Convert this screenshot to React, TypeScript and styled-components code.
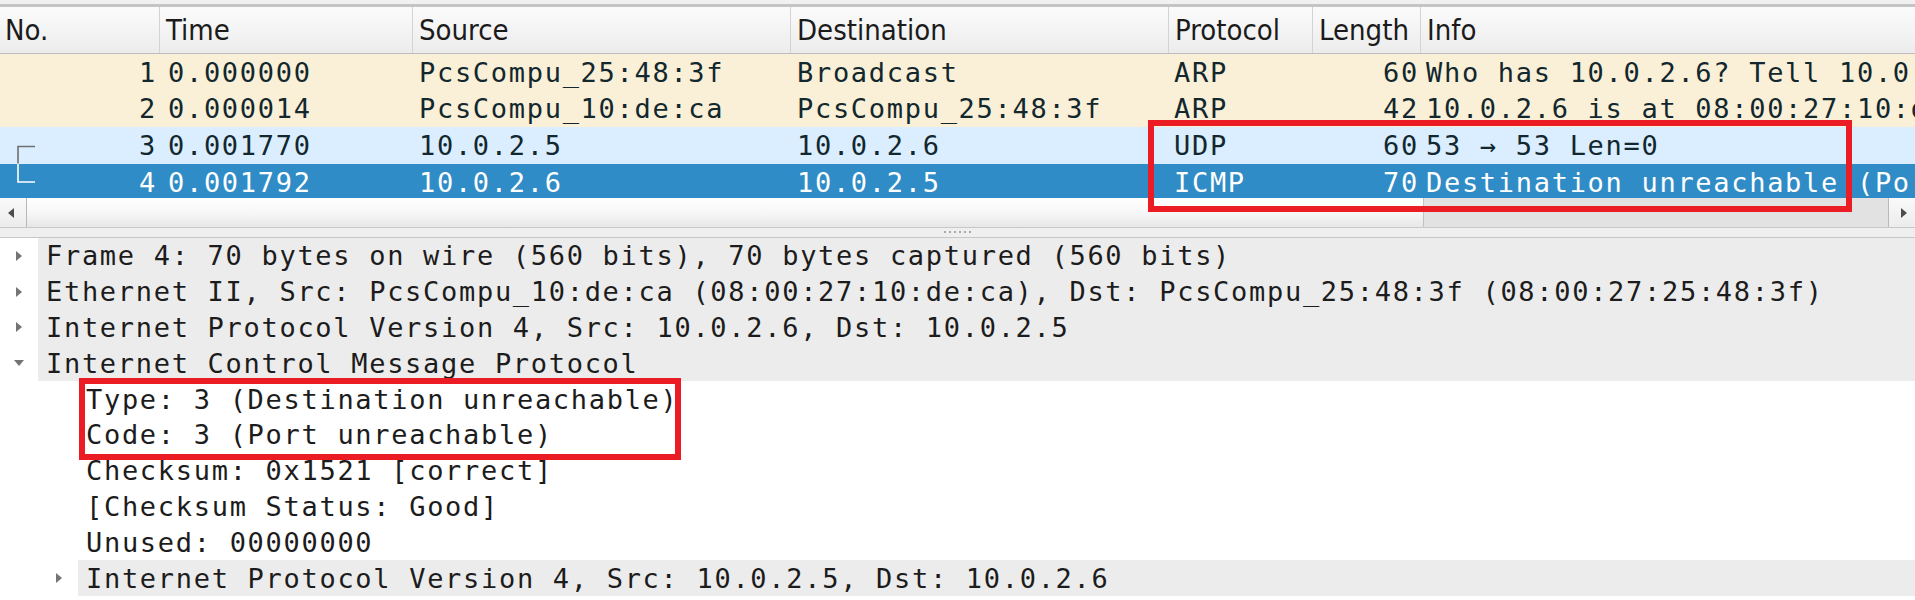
import React from 'react'
import styled, { createGlobalStyle } from 'styled-components'

const GlobalStyle = createGlobalStyle`
  html, body {
    margin: 0;
    padding: 0;
    background: #fff;
    overflow: hidden;
  }
  #root {
    width: 1915px;
    height: 600px;
  }
`

const MONO = `"DejaVu Sans Mono", "Liberation Mono", monospace`
const UI = `"Liberation Sans Narrow", "DejaVu Sans Condensed", "Liberation Sans", sans-serif`

const GRID = '159px 253px 378px 378px 144px 108px 1fr'

const Window = styled.div`
  position: relative;
  width: 1915px;
  height: 600px;
  overflow: hidden;
  display: flex;
  flex-direction: column;
  background: #fff;
`

const TopEdge = styled.div`
  flex: none;
  height: 4px;
  background: #f1f1f1;
  border-bottom: 3px solid #c4c4c4;
`

const HeaderRow = styled.div`
  flex: none;
  display: grid;
  grid-template-columns: ${GRID};
  height: 46px;
  border-bottom: 1px solid #bdbdbd;
  background: linear-gradient(#fbfbfb, #ececec);
`

const HeaderCell = styled.div<{ $first?: boolean }>`
  display: flex;
  align-items: center;
  padding-left: ${(p) => (p.$first ? 5 : 6)}px;
  border-left: ${(p) => (p.$first ? 'none' : '1px solid #d3d3d3')};
  font-family: ${UI};
  font-size: 29px;
  color: #1b1b1b;
  white-space: nowrap;
  overflow: hidden;
`

const Viewport = styled.div`
  flex: none;
  height: 144px;
  overflow: hidden;
`

const tones = {
  arp: { bg: '#faf0d7', fg: '#12272e', line: '#6f6f6f' },
  udp: { bg: '#daeeff', fg: '#12272e', line: '#6f6f6f' },
  selected: { bg: '#308cc6', fg: '#ffffff', line: '#ffffff' },
}

type Tone = keyof typeof tones

const PacketRow = styled.div<{ $tone: Tone }>`
  display: grid;
  grid-template-columns: ${GRID};
  height: 36.6px;
  background: ${(p) => tones[p.$tone].bg};
  color: ${(p) => tones[p.$tone].fg};
`

const Cell = styled.div<{ $right?: boolean; $pad: number }>`
  display: flex;
  align-items: center;
  justify-content: ${(p) => (p.$right ? 'flex-end' : 'flex-start')};
  padding: ${(p) => (p.$right ? `0 ${p.$pad}px 0 0` : `0 0 0 ${p.$pad}px`)};
  font-family: ${MONO};
  font-size: 27px;
  letter-spacing: 1.7px;
  white-space: pre;
  overflow: hidden;
`

const NoCell = styled.div`
  display: flex;
  align-items: stretch;
  padding-right: 2px;
  font-family: ${MONO};
  font-size: 27px;
  letter-spacing: 1.7px;
`

const Bracket = styled.svg`
  flex: none;
  margin-left: 17px;
`

const NoText = styled.span`
  margin-left: auto;
  display: flex;
  align-items: center;
`

const ScrollBar = styled.div`
  flex: none;
  display: flex;
  height: 29px;
  background: #e2e2e2;
`

const ScrollButton = styled.div<{ $side: 'left' | 'right' }>`
  flex: none;
  width: 26px;
  display: flex;
  align-items: center;
  justify-content: center;
  background: linear-gradient(#fafafa, #ececec);
  ${(p) => (p.$side === 'left' ? 'border-right: 1px solid #b9b9b9;' : 'border-left: 1px solid #b9b9b9;')}
`

const ArrowLeft = styled.div`
  width: 0;
  height: 0;
  border-top: 5px solid transparent;
  border-bottom: 5px solid transparent;
  border-right: 6px solid #4d4d4d;
  margin-right: 4px;
`

const ArrowRight = styled.div`
  width: 0;
  height: 0;
  border-top: 5px solid transparent;
  border-bottom: 5px solid transparent;
  border-left: 6px solid #4d4d4d;
  margin-left: 4px;
`

const Track = styled.div`
  flex: 1;
  display: flex;
`

const Thumb = styled.div`
  background: linear-gradient(#ffffff, #f6f6f6 55%, #e7e7e7);
  border-right: 1px solid #c2c2c2;
`

const Splitter = styled.div`
  flex: none;
  height: 9px;
  display: flex;
  align-items: center;
  justify-content: center;
  background: #efefef;
  border-top: 1px solid #c8c8c8;
  border-bottom: 1px solid #c8c8c8;
`

const Grip = styled.div`
  display: flex;
  gap: 3px;
  margin-bottom: 2px;
  span {
    width: 2px;
    height: 2px;
    background: #a9a9a9;
  }
`

const Details = styled.div`
  flex: 1;
  display: flex;
  flex-direction: column;
  background: #fff;
`

const DetailRow = styled.div`
  flex: none;
  display: flex;
  height: 35.8px;
`

const Indent = styled.div<{ $depth: number }>`
  flex: none;
  width: ${(p) => p.$depth * 40}px;
`

const ArrowSlot = styled.div`
  flex: none;
  width: 38px;
  display: flex;
  align-items: center;
  justify-content: center;
`

const Collapsed = styled.div`
  width: 0;
  height: 0;
  border-top: 5px solid transparent;
  border-bottom: 5px solid transparent;
  border-left: 6px solid #747474;
`

const Expanded = styled.div`
  width: 0;
  height: 0;
  border-left: 5px solid transparent;
  border-right: 5px solid transparent;
  border-top: 6px solid #747474;
`

const Label = styled.div<{ $branch?: boolean }>`
  flex: 1;
  display: flex;
  align-items: center;
  padding-left: 8px;
  background: ${(p) => (p.$branch ? '#ececec' : 'transparent')};
  font-family: ${MONO};
  font-size: 27px;
  letter-spacing: 1.7px;
  color: #1c1c1c;
  white-space: pre;
  overflow: hidden;
`

const Callout = styled.div<{ $x: number; $y: number; $w: number; $h: number }>`
  position: absolute;
  left: ${(p) => p.$x}px;
  top: ${(p) => p.$y}px;
  width: ${(p) => p.$w}px;
  height: ${(p) => p.$h}px;
  border: 6px solid #ec1c24;
  box-sizing: border-box;
  pointer-events: none;
`

const columns = [
  { label: 'No.' },
  { label: 'Time' },
  { label: 'Source' },
  { label: 'Destination' },
  { label: 'Protocol' },
  { label: 'Length' },
  { label: 'Info' },
]

type Packet = {
  no: number
  time: string
  src: string
  dst: string
  proto: string
  len: number
  info: string
  tone: Tone
  link?: 'start' | 'end'
}

const packets: Packet[] = [
  { no: 1, time: '0.000000', src: 'PcsCompu_25:48:3f', dst: 'Broadcast', proto: 'ARP', len: 60, info: 'Who has 10.0.2.6? Tell 10.0.2.5', tone: 'arp' },
  { no: 2, time: '0.000014', src: 'PcsCompu_10:de:ca', dst: 'PcsCompu_25:48:3f', proto: 'ARP', len: 42, info: '10.0.2.6 is at 08:00:27:10:de:ca', tone: 'arp' },
  { no: 3, time: '0.001770', src: '10.0.2.5', dst: '10.0.2.6', proto: 'UDP', len: 60, info: '53 → 53 Len=0', tone: 'udp', link: 'start' },
  { no: 4, time: '0.001792', src: '10.0.2.6', dst: '10.0.2.5', proto: 'ICMP', len: 70, info: 'Destination unreachable (Port unreachable)', tone: 'selected', link: 'end' },
]

type Node = { text: string; depth: number; state?: 'open' | 'closed' }

const tree: Node[] = [
  { text: 'Frame 4: 70 bytes on wire (560 bits), 70 bytes captured (560 bits)', depth: 0, state: 'closed' },
  { text: 'Ethernet II, Src: PcsCompu_10:de:ca (08:00:27:10:de:ca), Dst: PcsCompu_25:48:3f (08:00:27:25:48:3f)', depth: 0, state: 'closed' },
  { text: 'Internet Protocol Version 4, Src: 10.0.2.6, Dst: 10.0.2.5', depth: 0, state: 'closed' },
  { text: 'Internet Control Message Protocol', depth: 0, state: 'open' },
  { text: 'Type: 3 (Destination unreachable)', depth: 1 },
  { text: 'Code: 3 (Port unreachable)', depth: 1 },
  { text: 'Checksum: 0x1521 [correct]', depth: 1 },
  { text: '[Checksum Status: Good]', depth: 1 },
  { text: 'Unused: 00000000', depth: 1 },
  { text: 'Internet Protocol Version 4, Src: 10.0.2.5, Dst: 10.0.2.6', depth: 1, state: 'closed' },
]

const LinkMark = ({ kind, color }: { kind: 'start' | 'end'; color: string }) => (
  <Bracket width="18" height="36.6" viewBox="0 0 18 36.6">
    <path
      d={kind === 'start' ? 'M18 19.5 H1 V36.6' : 'M1 0 V18 H18'}
      fill="none"
      stroke={color}
      strokeWidth="1.6"
    />
  </Bracket>
)

const PacketList = () => (
  <>
    <HeaderRow>
      {columns.map((c, i) => (
        <HeaderCell key={c.label} $first={i === 0}>
          {c.label}
        </HeaderCell>
      ))}
    </HeaderRow>
    <Viewport>
      {packets.map((p) => (
        <PacketRow key={p.no} $tone={p.tone}>
          <NoCell>
            {p.link && <LinkMark kind={p.link} color={tones[p.tone].line} />}
            <NoText>{p.no}</NoText>
          </NoCell>
          <Cell $pad={9}>{p.time}</Cell>
          <Cell $pad={7}>{p.src}</Cell>
          <Cell $pad={7}>{p.dst}</Cell>
          <Cell $pad={6}>{p.proto}</Cell>
          <Cell $right $pad={1}>{p.len}</Cell>
          <Cell $pad={6}>{p.info}</Cell>
        </PacketRow>
      ))}
    </Viewport>
  </>
)

const visibleFraction = 0.75

const HScroll = () => (
  <ScrollBar>
    <ScrollButton $side="left">
      <ArrowLeft />
    </ScrollButton>
    <Track>
      <Thumb style={{ width: `${visibleFraction * 100}%` }} />
    </Track>
    <ScrollButton $side="right">
      <ArrowRight />
    </ScrollButton>
  </ScrollBar>
)

const ProtoTree = () => (
  <Details>
    {tree.map((n, i) => (
      <DetailRow key={i}>
        <Indent $depth={n.depth} />
        <ArrowSlot>
          {n.state === 'closed' && <Collapsed />}
          {n.state === 'open' && <Expanded />}
        </ArrowSlot>
        <Label $branch={!!n.state}>{n.text}</Label>
      </DetailRow>
    ))}
  </Details>
)

const App = () => (
  <Window>
    <GlobalStyle />
    <TopEdge />
    <PacketList />
    <HScroll />
    <Splitter>
      <Grip>
        {Array.from({ length: 6 }).map((_, i) => (
          <span key={i} />
        ))}
      </Grip>
    </Splitter>
    <ProtoTree />
    <Callout $x={1148} $y={120} $w={704} $h={92} />
    <Callout $x={79} $y={378} $w={602} $h={82} />
  </Window>
)

export default App
